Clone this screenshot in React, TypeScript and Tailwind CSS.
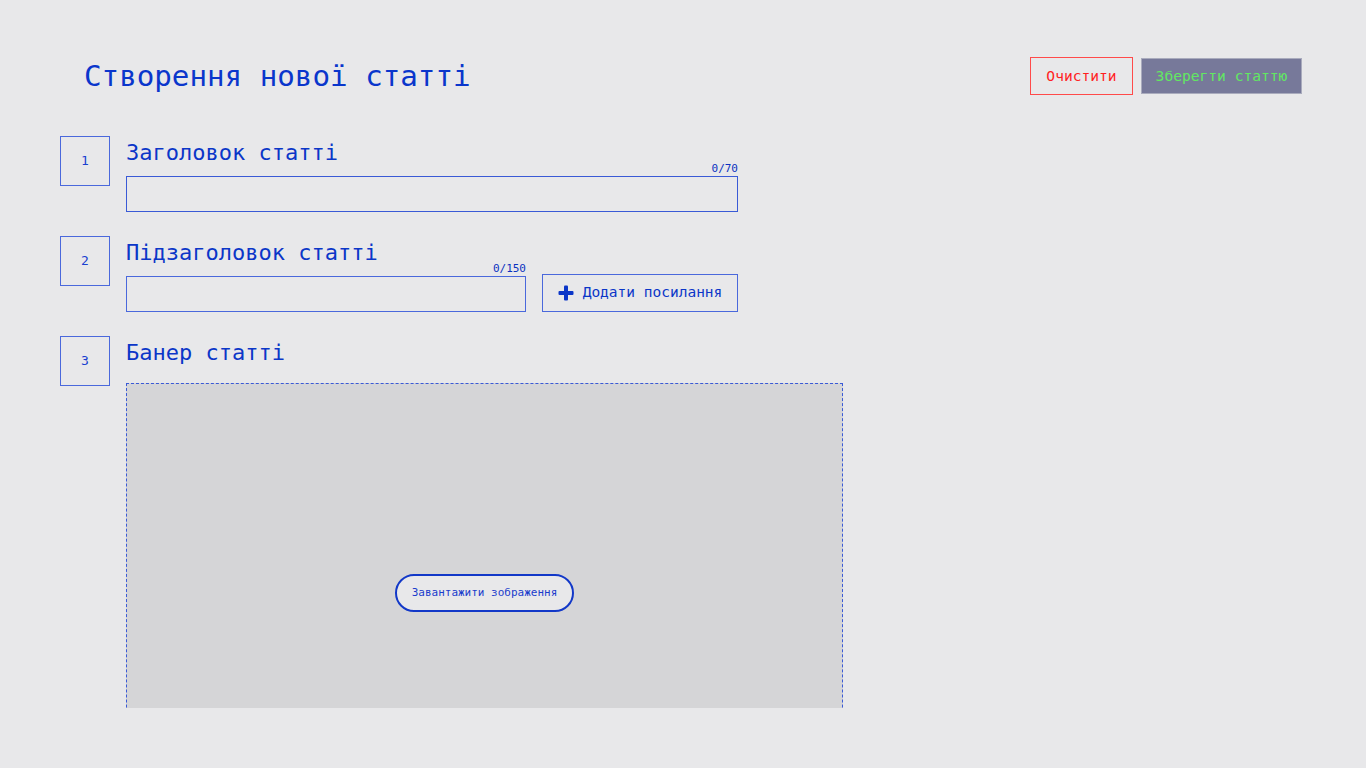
import { useState } from "react";

const mono = { fontFamily: '"DejaVu Sans Mono", "Liberation Mono", monospace' };

function StepBox({ n }: { n: number }) {
  return (
    <div className="w-[50px] h-[50px] shrink-0 border border-[#4a68dc] flex items-center justify-center text-[13px] text-[#1a40d0]">
      {n}
    </div>
  );
}

function Counter({ value, max }: { value: number; max: number }) {
  return (
    <div className="text-right text-[11px] leading-[12px] text-[#0b32c0] mt-[1px] mb-[1px]">
      {value}/{max}
    </div>
  );
}

function PlusIcon() {
  return (
    <svg width="16" height="16" viewBox="0 0 16 16" className="shrink-0">
      <rect x="6" y="0.5" width="4" height="15" rx="1" fill="#0b36c8" />
      <rect x="0.5" y="6" width="15" height="4" rx="1" fill="#0b36c8" />
    </svg>
  );
}

export default function App() {
  const [title, setTitle] = useState("");
  const [subtitle, setSubtitle] = useState("");

  return (
    <div className="w-full h-[768px] bg-[#e8e8ea] text-[#0b36c8]" style={mono}>
      <div className="h-[708px] overflow-hidden">
        <header className="flex items-center justify-between pt-[57px] pl-[84px] pr-[64px]">
          <h1 className="text-[29.2px] leading-[38px] text-[#0a36cc]">Створення нової статті</h1>
          <div className="flex items-center gap-2">
            <button className="h-[38px] w-[103px] border border-[#ff4a4a] text-[14.6px] text-[#ff1f1f] bg-transparent">
              Очистити
            </button>
            <button className="h-[36px] w-[161px] border border-[#a9abbd] bg-[#77799a] text-[14.6px] text-[#62e862]">
              Зберегти статтю
            </button>
          </div>
        </header>

        <main className="pl-[60px] mt-[41px] flex flex-col gap-6">
          <section className="flex items-start gap-4">
            <StepBox n={1} />
            <div className="flex flex-col">
              <h2 className="pt-[8px] h-[26px] text-[22px] leading-[18px]">Заголовок статті</h2>
              <div className="w-[612px]">
                <Counter value={title.length} max={70} />
                <input
                  value={title}
                  maxLength={70}
                  onChange={(e) => setTitle(e.target.value)}
                  className="w-full h-9 border border-[#3a5ad6] bg-transparent outline-none px-2 text-sm"
                />
              </div>
            </div>
          </section>

          <section className="flex items-start gap-4">
            <StepBox n={2} />
            <div className="flex flex-col">
              <h2 className="pt-[8px] h-[26px] text-[22px] leading-[18px]">Підзаголовок статті</h2>
              <div className="flex items-end gap-4">
                <div className="w-[400px]">
                  <Counter value={subtitle.length} max={150} />
                  <input
                    value={subtitle}
                    maxLength={150}
                    onChange={(e) => setSubtitle(e.target.value)}
                    className="w-full h-9 border border-[#4a68dc] bg-transparent outline-none px-2 text-sm"
                  />
                </div>
                <button className="h-[38px] w-[196px] border border-[#4a68dc] flex items-center justify-center gap-[9px] text-[14.5px] text-[#0b36c8]">
                  <PlusIcon />
                  Додати посилання
                </button>
              </div>
            </div>
          </section>

          <section className="flex items-start gap-4">
            <StepBox n={3} />
            <div className="flex flex-col">
              <h2 className="pt-[8px] h-[26px] text-[22px] leading-[18px]">Банер статті</h2>
              <div className="mt-[21px] w-[717px] h-[420px] border border-dashed border-[#3a5ad6] bg-[#d5d5d7] flex items-center justify-center">
                <button className="w-[179px] h-[38px] rounded-full border-2 border-[#1238c8] bg-[#e8e8ea] text-[11px] text-[#1a3ccc]">
                  Завантажити зображення
                </button>
              </div>
            </div>
          </section>
        </main>
      </div>
    </div>
  );
}
